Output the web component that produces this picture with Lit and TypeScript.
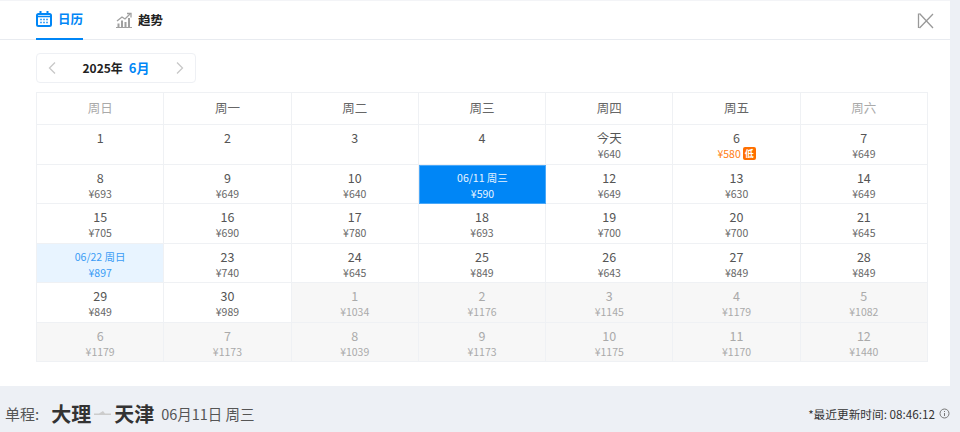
import { LitElement, html, css, svg } from "lit";
import { customElement } from "lit/decorators.js";

type Cell = { d: string; p?: string; k?: string; low?: boolean };
const c = (d: string, p?: string, k?: string, low?: boolean): Cell => ({ d, p, k, low });
const rows: Cell[] = [
  c("1"), c("2"), c("3"), c("4"), c("今天", "640"), c("6", "580", "orange", true), c("7", "649"),
  c("8", "693"), c("9", "649"), c("10", "640"), c("06/11 周三", "590", "sel"), c("12", "649"), c("13", "630"), c("14", "649"),
  c("15", "705"), c("16", "690"), c("17", "780"), c("18", "693"), c("19", "700"), c("20", "700"), c("21", "645"),
  c("06/22 周日", "897", "ret"), c("23", "740"), c("24", "645"), c("25", "849"), c("26", "643"), c("27", "849"), c("28", "849"),
  c("29", "849"), c("30", "989"), c("1", "1034", "off"), c("2", "1176", "off"), c("3", "1145", "off"), c("4", "1179", "off"), c("5", "1082", "off"),
  c("6", "1179", "off"), c("7", "1173", "off"), c("8", "1039", "off"), c("9", "1173", "off"), c("10", "1175", "off"), c("11", "1170", "off"), c("12", "1440", "off"),
];
const heads = ["周日", "周一", "周二", "周三", "周四", "周五", "周六"];

@customElement("app-root")
export class AppRoot extends LitElement {
  static styles = css`
    :host { display: block; width: 960px; height: 432px; overflow: hidden; background: #edf0f5;
      font-family: "Noto Sans CJK SC", "Noto Sans", sans-serif; color: #333; }
    .panel { width: 950px; height: 386px; background: #fff; box-sizing: border-box; border-top: 1px solid #f3f4f7; }
    .tabs { height: 38px; border-bottom: 1px solid #e8ebf0; display: flex; padding-left: 36px; position: relative; box-sizing: content-box; gap: 33px; }
    .tab { display: flex; align-items: center; gap: 6px; font-size: 12.5px; font-weight: 700; color: #222; height: 38px; box-sizing: border-box; padding-bottom: 1px; }
    .tab.on { color: #0086f6; border-bottom: 2px solid #0086f6; height: 39px; padding-bottom: 2px; }
    .close { position: absolute; left: 917px; top: 11px; width: 18px; height: 18px; }
    .nav { margin: 13px 0 0 36px; width: 160px; height: 30px; box-sizing: border-box; border: 1px solid #eef0f4; border-radius: 4px;
      display: flex; align-items: center; justify-content: space-between; padding: 0 9px 1px; }
    .ym { font-size: 12px; font-weight: 700; color: #222; display: flex; gap: 6px; align-items: center; }
    .ym b { color: #0086f6; font-weight: 700; font-size: 13px; }
    .grid { margin: 9px 0 0 36px; width: 892px; height: 270px; box-sizing: border-box; display: grid;
      grid-template-columns: repeat(7, 1fr); grid-template-rows: 32px repeat(6, 1fr);
      border-top: 1px solid #eff1f4; border-left: 1px solid #eff1f4; }
    .h, .cell { border-right: 1px solid #eff1f4; border-bottom: 1px solid #eff1f4; box-sizing: border-box; min-width: 0; }
    .h { display: flex; align-items: center; justify-content: center; font-size: 12.5px; color: #666; padding-bottom: 2px; }
    .h.we { color: #aaa; }
    .cell { display: flex; flex-direction: column; align-items: center; padding-top: 4px; }
    .d { font-size: 12.5px; line-height: 17px; color: #555; }
    .p { font-size: 10.5px; line-height: 13px; color: #666; display: flex; align-items: center; gap: 2px; margin-top: 1px; }
    .badge { background: #ff6f00; color: #fff; font-size: 9px; line-height: 13px; width: 13px; height: 13px; border-radius: 2px; text-align: center; font-weight: 700; }
    .orange .p { color: #ff7d13; }
    .sel { background: #0086f6; border: 1px solid #4aa8f8; padding-top: 3px; }
    .sel .d { color: #e8f4ff; font-size: 10.5px; } .sel .p { color: #e8f4ff; }
    .ret { background: #e8f4ff; }
    .ret .d { color: #3a9cf5; font-size: 10.5px; } .ret .p { color: #3a9cf5; }
    .off { background: #f7f7f7; }
    .off .d { color: #aaa; } .off .p { color: #aaa; }
    .foot { display: flex; align-items: center; height: 54px; padding: 0 0 0 5px; width: 950px; box-sizing: border-box; }
    .lab { font-size: 15px; color: #555; margin-right: 12px; }
    .city { font-size: 20px; font-weight: 700; color: #333; }
    .plane { margin: 0 3px; width: 17px; height: 8px; }
    .date { font-size: 14.5px; color: #555; margin-left: 7px; }
    .upd { margin-left: auto; font-size: 11.7px; color: #333; display: flex; align-items: center; gap: 4px; }
  `;

  render() {
    return html`
      <div class="panel">
        <div class="tabs">
          <div class="tab on">
            <svg width="16" height="16" viewBox="0 0 16 16" fill="none">
              <rect x="1" y="3" width="14" height="12" rx="1.5" stroke="#0086f6" stroke-width="2" />
              <path d="M4.5 0v4M11.5 0v4" stroke="#0086f6" stroke-width="2" />
              <path d="M1 5.5h14" stroke="#0086f6" stroke-width="1.5" />
              <path d="M4 8.5h8M4 11.500h8" stroke="#4aa8f8" stroke-width="1.5" stroke-dasharray="2 1" />
            </svg>
            日历
          </div>
          <div class="tab">
            <svg width="16" height="16" viewBox="0 0 16 16" fill="none" stroke="#a0a0a0">
              <path d="M1 9l5-4 3 2 5-5" stroke-width="1.3" /><path d="M11 1.5h4v4" stroke-width="1.3" />
              <path d="M2.500 15v-3.500M6 15V8.500M9.500 15v-5M13 15V6" stroke-width="2" />
              <path d="M0 15.500h16" stroke-width="1" />
            </svg>
            趋势
          </div>
          <svg class="close" viewBox="0 0 18 18" fill="none" stroke="#999" stroke-width="1.3">
            <path d="M2.500 1.500L16 16M16 2L2.500 16M1.500 1.500V16" />
          </svg>
        </div>
        <div class="nav">
          <svg width="12" height="14" viewBox="0 0 12 14" fill="none" stroke="#c8c8c8" stroke-width="1.3"><path d="M9 1.500L3.500 7 9 12.500" /></svg>
          <div class="ym"><span>2025年</span><b>6月</b></div>
          <svg width="12" height="14" viewBox="0 0 12 14" fill="none" stroke="#c8c8c8" stroke-width="1.3"><path d="M3 1.500L8.500 7 3 12.500" /></svg>
        </div>
        <div class="grid">
          ${heads.map((h, i) => html`<div class="h ${i === 0 || i === 6 ? "we" : ""}">${h}</div>`)}
          ${rows.map((r) => html`
            <div class="cell ${r.k ?? ""}">
              <div class="d">${r.d}</div>
              ${r.p ? html`<div class="p">¥${r.p}${r.low ? html`<span class="badge">低</span>` : ""}</div>` : ""}
            </div>`)}
        </div>
      </div>
      <div class="foot">
        <span class="lab">单程:</span>
        <span class="city">大理</span>
        <svg class="plane" viewBox="0 0 17 8">${svg`<path d="M0 4.500h17v1.500H0zM5 4.500l4-2.500 2 2.500z" fill="#ccc" />`}</svg>
        <span class="city">天津</span>
        <span class="date">06月11日 周三</span>
        <span class="upd">*最近更新时间: 08:46:12
          <svg width="11" height="11" viewBox="0 0 11 11" fill="none" stroke="#777"><circle cx="5.5" cy="5.5" r="4.5" /><path d="M5.5 5v3M5.500 3v1" /></svg>
        </span>
      </div>
    `;
  }
}
